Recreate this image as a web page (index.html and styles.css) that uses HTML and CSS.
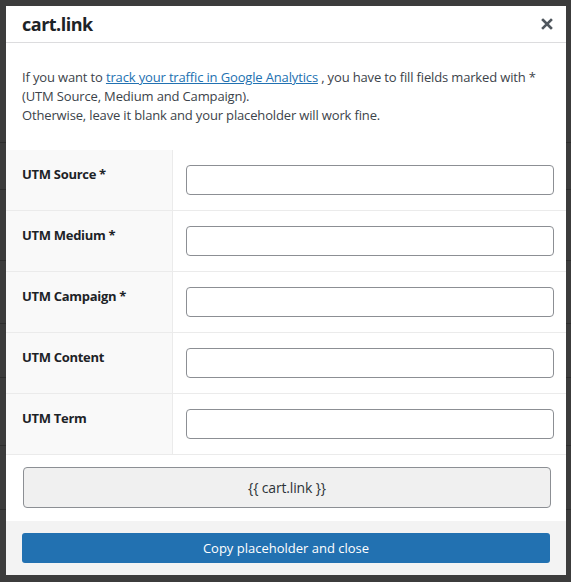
FILE: index.html
```html
<!DOCTYPE html>
<html lang="en">
<head>
<meta charset="utf-8">
<title>cart.link</title>
<link rel="stylesheet" href="styles.css">
</head>
<body>
<div class="backdrop">
  <div class="modal">
    <div class="modal-header">
      <h1 class="modal-title">cart.link</h1>
      <button class="close" type="button" aria-label="Close">
        <svg width="12" height="12" viewBox="0 0 12 12"><path d="M2 2 L10 10 M10 2 L2 10" stroke="#50575e" stroke-width="2.6" stroke-linecap="square"/></svg>
      </button>
    </div>
    <p class="intro">If you want to <a href="#">track your traffic in Google Analytics</a> , you have to fill fields marked with * (UTM Source, Medium and Campaign).<br>Otherwise, leave it blank and your placeholder will work fine.</p>
    <div class="form-table">
      <div class="row"><div class="label">UTM Source *</div><div class="field"><input type="text"></div></div>
      <div class="row"><div class="label">UTM Medium *</div><div class="field"><input type="text"></div></div>
      <div class="row"><div class="label">UTM Campaign *</div><div class="field"><input type="text"></div></div>
      <div class="row"><div class="label">UTM Content</div><div class="field"><input type="text"></div></div>
      <div class="row"><div class="label">UTM Term</div><div class="field"><input type="text"></div></div>
    </div>
    <div class="preview-wrap">
      <div class="preview">{{ cart.link }}</div>
    </div>
    <div class="modal-footer">
      <button class="primary" type="button">Copy placeholder and close</button>
    </div>
  </div>
</div>
</body>
</html>
```
FILE: styles.css
```css
* { box-sizing: border-box; }
html, body { margin: 0; padding: 0; }
body {
  font-family: "Open Sans", "Noto Sans", sans-serif;
  font-size: 13px;
  letter-spacing: -0.15px;
  color: #3c434a;
  background: #3b3b3b;
}
.backdrop {
  width: 571px;
  height: 582px;
  padding: 6px 5px 8px 6px;
  background:
    linear-gradient(#2e2e2e, #2e2e2e) 0 142px / 100% 1px no-repeat,
    linear-gradient(#2e2e2e, #2e2e2e) 0 189px / 100% 1px no-repeat,
    linear-gradient(#2e2e2e, #2e2e2e) 0 260px / 100% 1px no-repeat,
    linear-gradient(#2e2e2e, #2e2e2e) 0 323px / 100% 1px no-repeat,
    linear-gradient(#2e2e2e, #2e2e2e) 0 377px / 100% 1px no-repeat,
    linear-gradient(#2e2e2e, #2e2e2e) 0 445px / 100% 1px no-repeat,
    linear-gradient(#2e2e2e, #2e2e2e) 0 509px / 100% 1px no-repeat,
    #3c3c3c;
}
.modal {
  width: 560px;
  height: 568px;
  background: #fff;
  display: flex;
  flex-direction: column;
}
.modal-header {
  height: 37px;
  flex: none;
  display: flex;
  align-items: center;
  justify-content: space-between;
  padding: 0 12px 0 16px;
  border-bottom: 1px solid #dcdcde;
}
.modal-title {
  margin: 0;
  font-size: 18px;
  font-weight: 700;
  letter-spacing: -0.5px;
  color: #1d2327;
}
.close {
  border: 0;
  background: none;
  padding: 0;
  width: 14px;
  height: 14px;
  display: flex;
  align-items: center;
  justify-content: center;
  cursor: pointer;
}
.intro {
  margin: 25px 16px 25px 16px;
  line-height: 19px;
}
.intro a {
  color: #2271b1;
  text-decoration: underline;
}
.form-table {
  display: flex;
  flex-direction: column;
}
.row {
  display: flex;
  height: 61px;
  border-bottom: 1px solid #ebebeb;
}
.label {
  width: 167px;
  background: #f9f9f9;
  border-right: 1px solid #ebebeb;
  padding: 15px 0 0 16px;
  font-weight: 700;
  letter-spacing: -0.3px;
  color: #1d2327;
  line-height: 19px;
}
.field {
  flex: 1;
  padding: 15px 12px 0 13px;
}
.field input {
  width: 100%;
  height: 30px;
  border: 1px solid #8c8f94;
  border-radius: 4px;
  background: #fff;
  font: inherit;
}
.preview-wrap {
  padding: 12px 15px 13px 17px;
}
.preview {
  height: 41px;
  background: #f0f0f0;
  border: 1px solid #8c8f94;
  border-radius: 4px;
  display: flex;
  align-items: center;
  justify-content: center;
  font-size: 14px;
  color: #2c3338;
}
.modal-footer {
  flex: 1;
  background: #f3f3f3;
  padding: 12px 16px;
}
.primary {
  width: 100%;
  height: 30px;
  border: 0;
  border-radius: 3px;
  background: #2271b1;
  color: #fff;
  font: inherit;
  font-size: 13px;
}
```
